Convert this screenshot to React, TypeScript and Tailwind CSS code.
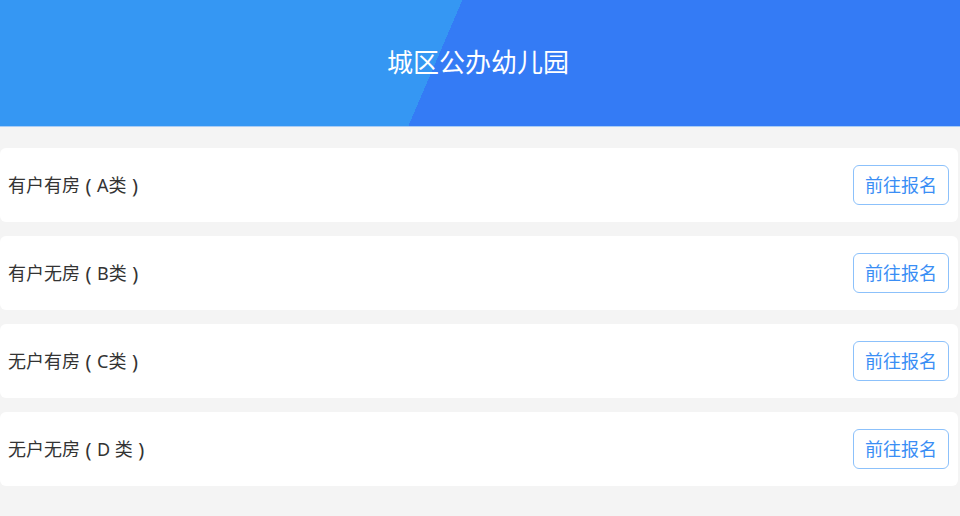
import React from "react";

const items: [string, string][] = [
  ["有户有房", "A类"],
  ["有户无房", "B类"],
  ["无户有房", "C类"],
  ["无户无房", "D 类"],
];

const P = ({ c }: { c: string }) => (
  <span className="inline-block w-[17px] text-center text-[20px] leading-none align-[-1px]">{c}</span>
);

export default function App() {
  return (
    <div
      className="w-[960px] h-[516px] overflow-hidden bg-[#f4f4f4]"
      style={{ fontFamily: '"Noto Sans", "Noto Sans CJK SC", sans-serif' }}
    >
      <div className="h-[126px] flex items-center justify-center bg-[linear-gradient(113.2deg,#3597f3_45.6%,#347bf5_45.6%)]">
        <h1 className="text-[26px] text-white font-normal leading-none pb-[2px] pr-[4px]">城区公办幼儿园</h1>
      </div>
      <div className="h-[1px] bg-[#a9cdf6]" />
      <div className="flex flex-col gap-[14px] pt-[21px] pr-[2px]">
        {items.map(([a, b]) => (
          <div key={a + b} className="h-[74px] bg-white rounded-[6px] flex items-center justify-between pl-[8px] pr-[9px]">
            <span className="text-[18px] text-[#333333] whitespace-pre">
              {a}
              <P c="(" />
              {b}
              <P c=")" />
            </span>
            <button className="w-[96px] h-[40px] rounded-[6px] border border-[#8cc1fb] text-[#3a8ef5] text-[18px] bg-white">
              前往报名
            </button>
          </div>
        ))}
      </div>
    </div>
  );
}
